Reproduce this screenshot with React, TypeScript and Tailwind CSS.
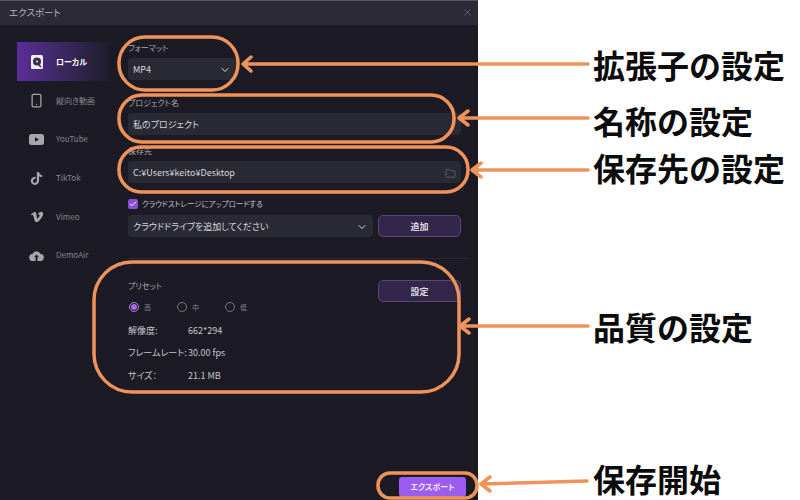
import React from "react";
import { ChevronDown, Folder, X, Smartphone, Check } from "lucide-react";
import { FaTiktok, FaVimeoV } from "react-icons/fa";

const font = { fontFamily: '"Noto Sans CJK JP", "Noto Sans", sans-serif' };

function Side({ icon, label, active }: { icon: React.ReactNode; label: string; active?: boolean }) {
  return (
    <div className={`h-[38.6px] w-[93px] pt-[2px] flex items-center ${active ? "bg-gradient-to-r from-[#5b2d9a] to-[#1e1c2a]" : ""}`}>
      <div className={`w-[39px] flex justify-center ${active ? "text-white" : "text-[#a5a5aa]"}`}>{icon}</div>
      <span className={`text-[8px] ${active ? "text-white font-bold" : "text-[#85858c]"}`}>{label}</span>
    </div>
  );
}

function Radio({ label, on, w }: { label: string; on?: boolean; w: string }) {
  return (
    <div className={`flex items-center gap-[5px] ${w}`}>
      <div className={`w-[10px] h-[10px] rounded-full border flex items-center justify-center ${on ? "border-[#b57be8]" : "border-[#77777e]"}`}>
        {on && <div className="w-[6px] h-[6px] rounded-full bg-[#a968e0]" />}
      </div>
      <span className="text-[7px] text-[#85858c]">{label}</span>
    </div>
  );
}

function Info({ k, v }: { k: string; v: string }) {
  return (
    <div className="flex items-center h-[22.5px] text-[9px] text-[#c4c4c8]">
      <span className="w-[60px] whitespace-nowrap">{k}</span>
      <span>{v}</span>
    </div>
  );
}

function PurpleButton({ label }: { label: string }) {
  return (
    <div className="w-[83px] h-[22px] pt-[2px] rounded-[5px] border border-[#5a4478] bg-[#33264a] flex items-center justify-center text-[9px] font-bold text-[#dcdce0]">
      {label}
    </div>
  );
}

const labelStyle = "text-[8px] leading-[11px] text-[#a8a8ae]";
const fieldStyle = "h-[22px] pt-[2px] rounded-[4px] bg-[#2a2a35] flex items-center justify-between px-[5px] text-[9px] text-[#d8d8dc]";

function Note({ label, top }: { label: string; top: string }) {
  return (
    <div className={`absolute left-[593px] ${top} text-[32px] leading-[36px] font-bold text-[#0c0c0c] whitespace-nowrap [font-feature-settings:normal]`}>{label}</div>
  );
}

export default function App() {
  return (
    <div className="relative w-[800px] h-[500px] bg-white overflow-hidden [font-feature-settings:'palt']" style={font}>
      <div className="w-[478px] h-[500px] bg-[#1c1b25] flex flex-col border-t border-[#55555a]">
        <div className="h-[24px] shrink-0 bg-[#2b2a36] flex items-center justify-between pl-[9px] pr-[5px] pb-[2px]">
          <span className="text-[9.5px] text-[#b4b4b8]">エクスポート</span>
          <X size={11} strokeWidth={1} className="text-[#a0a0a6]" />
        </div>
        <div className="flex flex-1">
          <div className="w-[128px] pl-[17px] pt-[17px] flex flex-col shrink-0">
            <Side
              active
              label="ローカル"
              icon={
                <svg width="12" height="14" viewBox="0 0 12 14">
                  <rect width="12" height="14" rx="1.5" fill="#eee" />
                  <circle cx="6" cy="6.5" r="4" fill="#3b2a55" />
                  <circle cx="6" cy="6.5" r="1" fill="#eee" />
                  <path d="M7 9l3 3" stroke="#3b2a55" strokeWidth="1.6" />
                </svg>
              }
            />
            <Side label="縦向き動画" icon={<Smartphone size={15} strokeWidth={2} />} />
            <Side
              label="YouTube"
              icon={
                <svg width="15" height="11" viewBox="0 0 15 11">
                  <rect width="15" height="11" rx="2.5" fill="#a5a5aa" />
                  <path d="M6 3.2v4.6l4-2.3z" fill="#1c1b25" />
                </svg>
              }
            />
            <Side label="TikTok" icon={<FaTiktok size={13} />} />
            <Side label="Vimeo" icon={<FaVimeoV size={14} />} />
            <Side
              label="DemoAir"
              icon={
                <svg width="15" height="11" viewBox="0 0 15 11">
                  <path d="M4 11a3.5 3.5 0 0 1-.6-7A4.5 4.5 0 0 1 11.6 4 3.5 3.5 0 0 1 11 11z" fill="#a5a5aa" />
                  <path d="M7.5 4.5L5 7.2h1.6V11h1.8V7.2H10z" fill="#1c1b25" />
                </svg>
              }
            />
          </div>
          <div className="flex-1 pt-[17px] flex flex-col relative">
            <div className={labelStyle}>フォーマット</div>
            <div className={`${fieldStyle} w-[108px] mt-[5px]`}>
              <span>MP4</span>
              <ChevronDown size={12} strokeWidth={2} />
            </div>
            <div className={`${labelStyle} mt-[17px]`}>プロジェクト名</div>
            <div className={`${fieldStyle} w-[333px] mt-[5px]`}>私のプロジェクト</div>
            <div className={`${labelStyle} mt-[10px]`}>保存先</div>
            <div className={`${fieldStyle} w-[333px] mt-[5px]`}>
              <span>C:¥Users¥keito¥Desktop</span>
              <Folder size={11} strokeWidth={1.2} className="text-[#85858c]" />
            </div>
            <div className="flex items-center gap-[4px] mt-[15px] h-[12px]">
              <div className="w-[10px] h-[10px] rounded-[2px] bg-[#8a4fd0] flex items-center justify-center">
                <Check size={8} strokeWidth={3} className="text-white" />
              </div>
              <span className="text-[7.5px] text-[#c0c0c6]">クラウドストレージにアップロードする</span>
            </div>
            <div className="flex gap-[5px] mt-[5px]">
              <div className={`${fieldStyle} w-[245px]`}>
                <span>クラウドドライブを追加してください</span>
                <ChevronDown size={12} strokeWidth={2} />
              </div>
              <PurpleButton label="追加" />
            </div>
            <div className="w-[339px] h-px bg-[#2a2a33] mt-[21px]" />
            <div className="flex mt-[21px]">
              <div className={`${labelStyle} w-[250px]`}>プリセット</div>
              <PurpleButton label="設定" />
            </div>
            <div className="flex items-center mt-[-1px] h-[12px] pl-px">
              <Radio on label="高" w="w-[48px]" />
              <Radio label="中" w="w-[48px]" />
              <Radio label="低" w="w-[48px]" />
            </div>
            <div className="mt-[6px]">
              <Info k="解像度:" v="662*294" />
              <Info k="フレームレート:" v="30.00 fps" />
              <Info k="サイズ：" v="21.1 MB" />
            </div>
            <div className="flex-1 flex items-end justify-end pr-[12px] pb-[3px]">
              <div className="w-[67px] h-[20px] rounded-[3px] bg-[#9d5cf0] flex items-center justify-center text-[8px] font-bold text-[#f0e8fa]">
                エクスポート
              </div>
            </div>
          </div>
        </div>
      </div>

      <svg className="absolute inset-0 pointer-events-none" width="800" height="500" fill="none" stroke="#f0935a" strokeWidth="3.5" strokeLinecap="round" strokeLinejoin="round">
        <rect x="119" y="37" width="119" height="53" rx="26" />
        <rect x="119" y="95" width="335" height="47" rx="23" />
        <rect x="119" y="147" width="349" height="45" rx="22" />
        <rect x="94" y="262" width="365" height="130" rx="38" />
        <rect x="378" y="473" width="99" height="25" rx="12" />
        <path d="M588 64H243M251 57l-8 7 8 7" />
        <path d="M588 118H459M468 111l-9 7 9 7" />
        <path d="M588 170H472M481 163l-9 7 9 7" />
        <path d="M588 326H460M469 319l-9 7 9 7" />
        <path d="M587 481L481 484M490 477l-9 7 9 7" />
      </svg>

      <Note label="拡張子の設定" top="top-[46px]" />
      <Note label="名称の設定" top="top-[102px]" />
      <Note label="保存先の設定" top="top-[149px]" />
      <Note label="品質の設定" top="top-[308px]" />
      <Note label="保存開始" top="top-[460px]" />
    </div>
  );
}
